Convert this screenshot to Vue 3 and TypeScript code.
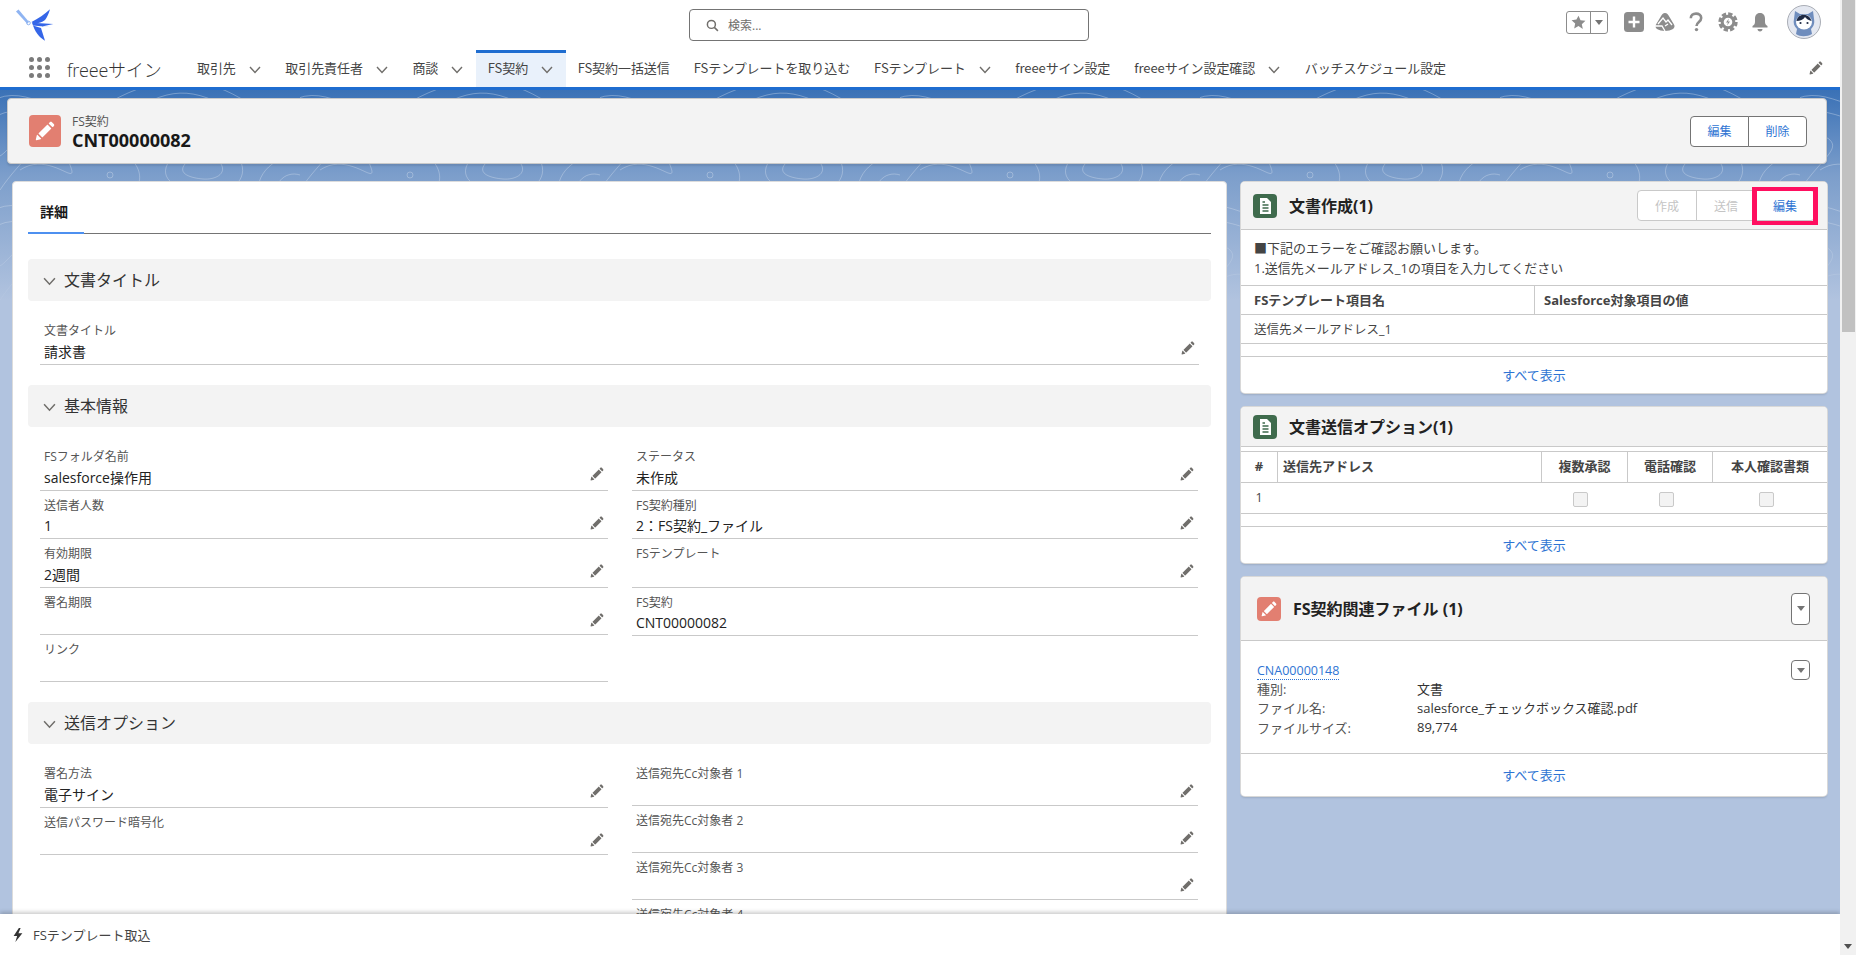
<template>
  <div class="app">
    <div class="page">
      <header class="global-header">
        <div class="top-row">
          <div class="logo-cell">
            <svg class="logo" viewBox="0 0 38 32">
              <path d="M0 2.500 2.500 .5 13 13l-1.800 1.800Z" fill="#8fb4f2" />
              <circle cx="12.500" cy="14" r="1.800" fill="none" stroke="#8fb4f2" />
              <path d="M34 .3C32.500 5 31 9 29 11 26 13.500 21 15 17.500 14.500L15.500 13C22 10 29 5 34 .3Z" fill="#3566e8" />
              <path d="M16 13.800 37.300 15 26 17.500 35.700 18.300 17 16.500Z" fill="#3566e8" />
              <path d="M17 16.500 25 19 29 31.700C25 29.500 20 25 17 16.500Z" fill="#3566e8" />
            </svg>
          </div>
          <div class="search">
            <svg class="search-icon" viewBox="0 0 14 14"><circle cx="5.8" cy="5.8" r="4.3" /><path d="M9 9l3.8 3.8" /></svg>
            <span>検索...</span>
          </div>
          <div class="actions">
            <div class="fav">
              <span class="fav-star">
                <svg viewBox="0 0 24 24"><path d="M12 2.500l2.900 6.400 6.900.8-5.100 4.700 1.400 6.900L12 17l-6.100 3.300 1.400-6.900-5.100-4.700 6.900-.8z" /></svg>
              </span>
              <span class="fav-arrow"><i class="tri"></i></span>
            </div>
            <svg class="act plus" viewBox="0 0 20 20">
              <rect width="20" height="20" rx="3.500" fill="#8c8c8c" />
              <path d="M10 4.500v11M4.500 10h11" stroke="#fff" stroke-width="2.400" />
            </svg>
            <svg class="act trail" viewBox="0 0 20 20">
              <path d="M10 1C12 1 13 2.500 14.500 5L19 12.500C20 14 19.500 16 18 17 14 19.500 6 19.500 2 17 .5 16 0 14 1 12.500L5.500 5C7 2.500 8 1 10 1Z" fill="#8c8c8c" />
              <path d="M3 12 8 6l3 4 2-2 4 5M0 14h7l3 5M10 14l3-2" fill="none" stroke="#fff" stroke-width="1.300" />
            </svg>
            <svg class="act help" viewBox="0 0 14 20">
              <path d="M1.800 6.200C1.800 3.400 4 1.600 7 1.600s5.200 1.700 5.200 4.300c0 4-4.700 4-4.700 8.100" fill="none" stroke="#8c8c8c" stroke-width="2.600" />
              <circle cx="7.500" cy="17.600" r="1.700" fill="#8c8c8c" />
            </svg>
            <svg class="act gear" viewBox="0 0 20 20">
              <circle cx="10" cy="10" r="8.200" fill="none" stroke="#8c8c8c" stroke-width="3" stroke-dasharray="4.300 2.130" />
              <circle cx="10" cy="10" r="5.800" fill="none" stroke="#8c8c8c" stroke-width="3" />
              <path d="M11 6.500 8 10.500h2l-1 3 3-4h-2z" fill="#8c8c8c" />
            </svg>
            <svg class="act bell" viewBox="0 0 20 20">
              <path d="M10 1C6.500 1 5 3.500 5 6.500V10c0 2-1 3-2.500 4v1.500h15V14C16 13 15 12 15 10V6.500C15 3.500 13.500 1 10 1Z" fill="#8c8c8c" />
              <path d="M7.500 17h5c0 1.500-1 2.500-2.500 2.500S7.500 18.500 7.500 17Z" fill="#8c8c8c" />
            </svg>
            <svg class="avatar" viewBox="0 0 34 34">
              <circle cx="17" cy="17" r="16.500" fill="#e4e8f1" stroke="#a9adb5" />
              <path d="M8 6l5 3h8l5-3 1 8c1 5-1 8-3 10l1 5c-5 3-12 3-16 0l1-5c-3-3-4-6-3-10Z" fill="#6f8dbd" />
              <ellipse cx="17" cy="17" rx="8" ry="7.500" fill="#fff" />
              <path d="M9.500 16c1-5 5-7 9-6 3 .5 5 3 6 6-3-1-5-2-6.500-4-1.500 2.500-5 4-8.500 4Z" fill="#1f2a44" />
              <circle cx="13.500" cy="18" r="1.100" fill="#1f2a44" />
              <circle cx="20.500" cy="18" r="1.100" fill="#1f2a44" />
            </svg>
          </div>
        </div>
        <nav class="nav-row">
          <div class="waffle">
            <i v-for="n in 9" :key="n"></i>
          </div>
          <span class="app-name">freeeサイン</span>
          <div
            v-for="tab in tabs"
            :key="tab.label"
            class="tab"
            :class="{ active: tab.active }"
          >
            {{ tab.label }}
            <svg v-if="tab.menu" class="chev" viewBox="0 0 12 8"><path d="M1 1l5 5.500L11 1" /></svg>
          </div>
          <svg class="pencil nav-pencil" viewBox="0 0 52 52"><path :d="editPath" /></svg>
        </nav>
      </header>

      <main class="content">
        <svg class="texture" width="1840" height="230">
          <defs>
            <pattern id="topo" width="300" height="110" patternUnits="userSpaceOnUse">
              <path d="M-10 30C30 0 70 60 120 28S190 -5 240 24 290 50 310 30" />
              <path d="M-10 12C30 -12 60 40 110 12S200 -15 240 8 290 28 310 12" />
              <path d="M20 80C50 60 80 100 70 75S40 40 90 50 150 90 130 105" />
              <path d="M0 100C20 70 40 60 30 50S10 60 0 66" />
              <path d="M170 70c20-25 60-20 70 0s-10 35-35 33-50-13-35-33Z" />
              <path d="M185 74c10-12 30-10 36 0s-6 16-18 15-26-5-18-15Z" />
              <circle cx="150" cy="50" r="4" />
              <circle cx="110" cy="85" r="3" />
              <path d="M260 110C250 85 280 60 300 70" />
              <path d="M280 110C270 95 285 80 300 85" />
            </pattern>
            <linearGradient id="fade" x1="0" y1="0" x2="0" y2="1">
              <stop offset="0" stop-color="#fff" stop-opacity="1" />
              <stop offset=".55" stop-color="#fff" stop-opacity=".8" />
              <stop offset="1" stop-color="#fff" stop-opacity="0" />
            </linearGradient>
            <mask id="fadeMask"><rect width="1840" height="230" fill="url(#fade)" /></mask>
          </defs>
          <rect width="1840" height="230" fill="url(#topo)" mask="url(#fadeMask)" />
        </svg>

        <div class="record-head">
          <span class="tile orange big">
            <svg viewBox="0 0 52 52"><path :d="editPath" /></svg>
          </span>
          <div class="record-title">
            <div class="record-type">FS契約</div>
            <div class="record-name">CNT00000082</div>
          </div>
          <div class="btn-group head-btns">
            <button type="button">編集</button>
            <button type="button">削除</button>
          </div>
        </div>

        <div class="columns">
          <section class="detail-card">
            <div class="tabbar"><span class="tab-detail">詳細</span></div>

            <template v-for="sec in sections" :key="sec.title">
              <div class="sec-head">
                <svg class="chev" viewBox="0 0 12 8"><path d="M1 1l5 5.500L11 1" /></svg>
                {{ sec.title }}
              </div>
              <div class="fields" :class="{ single: !sec.right }">
                <div class="field-col">
                  <div
                    v-for="f in sec.left"
                    :key="f.label"
                    class="field"
                    :class="{ empty: !f.value }"
                  >
                    <div class="f-label">{{ f.label }}</div>
                    <div class="f-value">{{ f.value }}</div>
                    <svg v-if="!f.readonly" class="pencil" viewBox="0 0 52 52"><path :d="editPath" /></svg>
                  </div>
                </div>
                <div v-if="sec.right" class="field-col">
                  <div
                    v-for="f in sec.right"
                    :key="f.label"
                    class="field"
                    :class="{ empty: !f.value }"
                  >
                    <div class="f-label">{{ f.label }}</div>
                    <div class="f-value">{{ f.value }}</div>
                    <svg v-if="!f.readonly" class="pencil" viewBox="0 0 52 52"><path :d="editPath" /></svg>
                  </div>
                </div>
              </div>
            </template>
          </section>

          <aside class="side">
            <section class="card">
              <div class="card-head h48">
                <span class="tile green">
                  <svg viewBox="0 0 24 24"><path d="M7 4h7l4 4v12H7Z" /><path d="M9.500 11h6M9.500 14h6M9.500 17h6M9.500 8h2.500" stroke="#3f6b4d" stroke-width="1.500" /></svg>
                </span>
                <h2>文書作成(1)</h2>
                <div class="btn-group muted">
                  <button type="button" disabled>作成</button>
                  <button type="button" disabled>送信</button>
                  <button type="button" class="on">編集</button>
                  <span class="mark"></span>
                </div>
              </div>
              <div class="notice">
                <p>■下記のエラーをご確認お願いします。</p>
                <p>1.送信先メールアドレス_1の項目を入力してください</p>
              </div>
              <div class="grid-row th two">
                <div>FSテンプレート項目名</div>
                <div class="narrow">Salesforce対象項目の値</div>
              </div>
              <div class="grid-row two td">
                <div class="plain">送信先メールアドレス_1</div>
              </div>
              <div class="spacer"></div>
              <a class="view-all">すべて表示</a>
            </section>

            <section class="card">
              <div class="card-head h40">
                <span class="tile green">
                  <svg viewBox="0 0 24 24"><path d="M7 4h7l4 4v12H7Z" /><path d="M9.500 11h6M9.500 14h6M9.500 17h6M9.500 8h2.500" stroke="#3f6b4d" stroke-width="1.500" /></svg>
                </span>
                <h2>文書送信オプション(1)</h2>
              </div>
              <div class="grid-row th five">
                <div class="c">#</div>
                <div>送信先アドレス</div>
                <div class="c">複数承認</div>
                <div class="c">電話確認</div>
                <div class="c">本人確認書類</div>
              </div>
              <div class="grid-row five">
                <div class="c plain">1</div>
                <div></div>
                <div class="c box"><i class="check"></i></div>
                <div class="c box"><i class="check"></i></div>
                <div class="c box"><i class="check"></i></div>
              </div>
              <div class="spacer"></div>
              <a class="view-all">すべて表示</a>
            </section>

            <section class="card">
              <div class="card-head h64">
                <span class="tile orange">
                  <svg viewBox="0 0 52 52"><path :d="editPath" /></svg>
                </span>
                <h2>FS契約関連ファイル (1)</h2>
                <span class="menu-btn tall"><i class="tri"></i></span>
              </div>
              <div class="file">
                <span class="menu-btn"><i class="tri"></i></span>
                <a class="file-link">CNA00000148</a>
                <dl>
                  <template v-for="row in fileRows" :key="row[0]">
                    <dt>{{ row[0] }}</dt>
                    <dd>{{ row[1] }}</dd>
                  </template>
                </dl>
              </div>
              <a class="view-all file-all">すべて表示</a>
            </section>
          </aside>
        </div>
      </main>

      <footer class="utility">
        <svg viewBox="0 0 12 16"><path d="M7 0 1 9h4l-2 7 8-10H6.500L9 0Z" /></svg>
        FSテンプレート取込
      </footer>
    </div>

    <div class="scrollbar">
      <div class="thumb"></div>
      <i class="sb-arrow"></i>
    </div>
  </div>
</template>

<script setup lang="ts">
interface Field {
  label: string
  value?: string
  readonly?: boolean
}

interface Section {
  title: string
  left: Field[]
  right?: Field[]
}

const editPath =
  'M9.5 33.4l8.9 8.9c.4.4 1 .4 1.4 0L42 20c.4-.4.4-1 0-1.4l-8.8-8.8c-.4-.4-1-.4-1.4 0L9.5 32.1c-.4.4-.4 1 0 1.3zM36.1 5.7c-.4.4-.4 1 0 1.4l8.8 8.8c.4.4 1 .4 1.4 0l2.5-2.5c1.6-1.5 1.6-3.9 0-5.5l-4.7-4.7c-1.6-1.6-4.1-1.6-5.7 0l-2.3 2.5zM2.1 48.2c-.2 1 .7 1.9 1.7 1.7l10.9-2.6c.4-.1.7-.3.9-.5l.2-.2c.2-.2.3-.9-.1-1.3l-9-9c-.4-.4-1.1-.3-1.3-.1l-.2.2c-.3.3-.4.6-.5.9L2.1 48.2z'

const tabs = [
  { label: '取引先', menu: true },
  { label: '取引先責任者', menu: true },
  { label: '商談', menu: true },
  { label: 'FS契約', menu: true, active: true },
  { label: 'FS契約一括送信' },
  { label: 'FSテンプレートを取り込む' },
  { label: 'FSテンプレート', menu: true },
  { label: 'freeeサイン設定' },
  { label: 'freeeサイン設定確認', menu: true },
  { label: 'バッチスケジュール設定' },
]

const sections: Section[] = [
  {
    title: '文書タイトル',
    left: [{ label: '文書タイトル', value: '請求書' }],
  },
  {
    title: '基本情報',
    left: [
      { label: 'FSフォルダ名前', value: 'salesforce操作用' },
      { label: '送信者人数', value: '1' },
      { label: '有効期限', value: '2週間' },
      { label: '署名期限' },
      { label: 'リンク', readonly: true },
    ],
    right: [
      { label: 'ステータス', value: '未作成' },
      { label: 'FS契約種別', value: '2：FS契約_ファイル' },
      { label: 'FSテンプレート', value: ' ' },
      { label: 'FS契約', value: 'CNT00000082', readonly: true },
    ],
  },
  {
    title: '送信オプション',
    left: [
      { label: '署名方法', value: '電子サイン' },
      { label: '送信パスワード暗号化' },
    ],
    right: [
      { label: '送信宛先Cc対象者 1' },
      { label: '送信宛先Cc対象者 2' },
      { label: '送信宛先Cc対象者 3' },
      { label: '送信宛先Cc対象者 4' },
    ],
  },
]

const fileRows = [
  ['種別:', '文書'],
  ['ファイル名:', 'salesforce_チェックボックス確認.pdf'],
  ['ファイルサイズ:', '89,774'],
]
</script>

<style scoped>
.app {
  display: flex;
  width: 1856px;
  height: 955px;
  overflow: hidden;
  font-family: "Open Sans", "Noto Sans CJK JP", sans-serif;
  font-size: 13px;
  color: #444;
}
.page {
  position: relative;
  width: 1840px;
  display: flex;
  flex-direction: column;
}

/* header */
.global-header {
  background: #fff;
  border-bottom: 3px solid #1f6dd0;
}
.top-row {
  display: grid;
  grid-template-columns: 689px 400px 1fr;
  height: 50px;
}
.logo-cell {
  padding: 9px 0 0 16px;
}
.logo {
  display: block;
  width: 38px;
  height: 32px;
}
.search {
  display: flex;
  align-items: center;
  gap: 9px;
  height: 32px;
  margin-top: 9px;
  padding-left: 16px;
  border: 1px solid #747474;
  border-radius: 4px;
  box-sizing: border-box;
  color: #706e6b;
  font-size: 12px;
}
.search-icon {
  width: 13px;
  height: 13px;
  fill: none;
  stroke: #706e6b;
  stroke-width: 1.6;
}
.actions {
  display: flex;
  align-items: center;
  justify-content: flex-end;
  padding-right: 19px;
  height: 44px;
}
.fav {
  display: flex;
  width: 42px;
  height: 23px;
  border: 1px solid #8c8c8c;
  border-radius: 3px;
  box-sizing: border-box;
  margin-right: 16px;
}
.fav-star {
  width: 23px;
  border-right: 1px solid #8c8c8c;
  display: flex;
  align-items: center;
  justify-content: center;
}
.fav-star svg {
  width: 17px;
  height: 17px;
  fill: #8c8c8c;
}
.fav-arrow {
  flex: 1;
  display: flex;
  align-items: center;
  justify-content: center;
}
.tri {
  display: block;
  width: 0;
  height: 0;
  border-left: 4px solid transparent;
  border-right: 4px solid transparent;
  border-top: 5px solid #747474;
}
.act {
  display: block;
  width: 20px;
  height: 20px;
}
.act.plus { margin-right: 11px; }
.act.trail { margin-right: 14px; }
.act.help { width: 14px; margin-right: 15px; }
.act.gear { margin-right: 12px; }
.act.bell { margin-right: 17px; }
.avatar {
  width: 34px;
  height: 34px;
}
.nav-row {
  display: flex;
  align-items: center;
  height: 37px;
  padding-left: 29px;
}
.waffle {
  display: grid;
  grid-template-columns: repeat(3, 5px);
  gap: 3px;
  margin-top: -2px;
}
.waffle i {
  width: 5px;
  height: 5px;
  border-radius: 50%;
  background: #7b7b7b;
}
.app-name {
  width: 118px;
  margin-left: 17px;
  font-size: 18px;
  color: #333;
  font-weight: 300;
  letter-spacing: -0.2px;
}
.tab {
  display: flex;
  align-items: center;
  height: 37px;
  padding: 0 12px 6px;
  box-sizing: border-box;
  white-space: nowrap;
  font-family: "Noto Sans CJK JP", sans-serif;
  font-size: 13px;
  letter-spacing: -0.07px;
  border-top: 3px solid transparent;
}
.tab .chev {
  margin: 6px 0.5px 0 13px;
}
.tab.active {
  background: #e9f1fb;
  border-top-color: #1f6dd0;
}
.chev {
  width: 12px;
  height: 8px;
  flex: none;
  fill: none;
  stroke: #706e6b;
  stroke-width: 1.4;
}
.pencil {
  position: absolute;
  right: 3px;
  top: 50%;
  width: 14px;
  height: 14px;
  fill: #706e6b;
}
.nav-row .nav-pencil {
  position: static;
  margin-left: auto;
  margin-right: 17px;
  margin-top: -2px;
}

/* page background */
.content {
  position: relative;
  flex: 1;
  overflow: hidden;
  padding-top: 8px;
  background: linear-gradient(#3a71b6 0, #7c9ecb 85px, #b1c3df 210px);
}
.texture {
  position: absolute;
  left: 0;
  top: 0;
}
.texture path,
.texture circle {
  fill: none;
  stroke: #fff;
  stroke-opacity: 0.3;
  stroke-width: 1;
}
.record-head {
  position: relative;
  display: flex;
  align-items: center;
  height: 66px;
  margin: 0 13px 17px 7px;
  padding: 0 19px 0 21px;
  box-sizing: border-box;
  background: #f3f3f3;
  border: 1px solid #c9c9c9;
  border-radius: 4px;
  box-shadow: 0 2px 2px rgba(0, 0, 0, 0.1);
}
.record-title {
  margin: 2px 0 0 11px;
}
.record-type {
  font-size: 12px;
  line-height: 16px;
  color: #555;
}
.record-name {
  font-size: 18px;
  font-weight: 700;
  line-height: 20px;
  color: #181818;
}
.tile {
  flex: none;
  display: flex;
  align-items: center;
  justify-content: center;
  width: 24px;
  height: 24px;
  border-radius: 4px;
}
.tile svg {
  width: 100%;
  height: 100%;
  fill: #fff;
}
.tile.orange {
  background: #e27f71;
}
.tile.orange svg {
  width: 16px;
  height: 16px;
}
.tile.big {
  width: 32px;
  height: 32px;
}
.tile.big svg {
  width: 20px;
  height: 20px;
}
.tile.green {
  background: #3f6b4d;
  border-radius: 4px;
}
.btn-group {
  position: relative;
  display: flex;
  margin-left: auto;
}
.btn-group button {
  width: 60px;
  height: 31px;
  padding: 0;
  margin-left: -1px;
  background: #fff;
  border: 1px solid #747474;
  color: #2e74d3;
  font: inherit;
  font-size: 12px;
}
.head-btns button {
  width: 59px;
}
.btn-group button:first-of-type {
  border-radius: 4px 0 0 4px;
}
.btn-group button:last-of-type {
  border-radius: 0 4px 4px 0;
}
.btn-group.muted button {
  border-color: #c9c9c9;
}
.btn-group.muted button:disabled {
  color: #c4c4c4;
}
.mark {
  position: absolute;
  right: -3px;
  top: -3px;
  width: 66px;
  height: 38px;
  box-sizing: border-box;
  border: solid #ff0f60;
  border-width: 4px 5px;
}

/* columns */
.columns {
  position: relative;
  display: grid;
  grid-template-columns: 1215px 586px;
  gap: 14px;
  margin-left: 12px;
  align-items: start;
}
.detail-card {
  padding: 0 15px 30px;
  background: #fff;
  border: 1px solid #dcdcdc;
  border-radius: 4px;
  box-sizing: border-box;
}
.tabbar {
  height: 51px;
  margin-bottom: 25px;
  display: flex;
  align-items: flex-end;
  border-bottom: 1px solid #747474;
}
.tab-detail {
  width: 56px;
  box-sizing: border-box;
  height: 33px;
  margin-bottom: -1px;
  padding-left: 12px;
  font-size: 14px;
  font-weight: 700;
  color: #181818;
  border-bottom: 2px solid #4d90f0;
}
.sec-head {
  display: flex;
  align-items: center;
  gap: 8px;
  height: 42px;
  padding: 0 0 2px 15px;
  box-sizing: border-box;
  background: #f3f3f3;
  border-radius: 4px;
  font-size: 16px;
  color: #333;
}
.sec-head .chev {
  width: 13px;
  height: 9px;
  margin-top: 5px;
}
.fields {
  display: grid;
  grid-template-columns: 568px 566px;
  column-gap: 24px;
  margin: 15px 12px 20.5px;
}
.fields.single {
  grid-template-columns: 1fr;
}
.field {
  position: relative;
  height: 48.5px;
  box-sizing: border-box;
  padding: 7px 0 0 4px;
  border-bottom: 1px solid #c9c9c9;
}
.field.empty {
  height: 47px;
}
.f-label {
  font-size: 12px;
  line-height: 16px;
  color: #555;
}
.f-value {
  margin-top: 2.5px;
  font-size: 14px;
  line-height: 20px;
  color: #222;
}
.field .pencil {
  right: 4px;
  top: 25px;
}

/* side cards */
.side {
  display: flex;
  flex-direction: column;
  gap: 14px;
  margin-top: 1px;
}
.card {
  background: #fff;
  border-radius: 4px;
  box-shadow: 0 0 0 1px #d8d8d8, 0 2px 2px rgba(0, 0, 0, 0.12);
  overflow: hidden;
}
.card-head {
  display: flex;
  align-items: center;
  gap: 12px;
  padding: 0 12px;
  background: #f3f3f3;
  box-sizing: border-box;
  border-bottom: 1px solid #c9c9c9;
}
.card-head h2 {
  margin: 0;
  padding-bottom: 1px;
  font-size: 16px;
  font-weight: 700;
  color: #222;
}
.h48 { height: 48px; }
.h40 { height: 40px; }
.h64 { height: 64px; padding: 0 17px 0 16px; }
.notice {
  height: 55px;
  padding: 8px 13px 0;
  box-sizing: border-box;
  font-size: 13px;
  line-height: 20px;
}
.notice p { margin: 0; }
.grid-row {
  display: grid;
  font-size: 13px;
  border-top: 1px solid #c9c9c9;
  box-sizing: border-box;
}
.grid-row > div {
  display: flex;
  align-items: center;
  padding: 0 0 1px 13px;
}
.grid-row > div.narrow {
  padding-left: 9px;
}
.grid-row.th > div {
  font-weight: 700;
  color: #444;
}
.grid-row.th.five > div {
  padding-bottom: 3px;
}
.grid-row.th > div + div {
  border-left: 1px solid #c9c9c9;
}
.grid-row > div.c {
  justify-content: center;
  padding-left: 0;
}
.grid-row > div.box {
  padding: 2px 7px 0 0;
}
.grid-row > div.plain {
  font-weight: 400;
  font-size: 12.5px;
}
.two {
  grid-template-columns: 293px 293px;
  height: 29px;
}
.five {
  grid-template-columns: 36px 264px 86px 85px 115px;
  height: 31px;
}
.th.five {
  margin-top: 4px;
}
.grid-row.five > div:nth-child(2) {
  padding-left: 5px;
}
.check {
  display: block;
  width: 15px;
  height: 15px;
  border: 1px solid #c9c9c9;
  border-radius: 2px;
  background: #f3f3f3;
  box-sizing: border-box;
}
.spacer {
  height: 13px;
  border-top: 1px solid #c9c9c9;
  box-sizing: border-box;
}
.view-all {
  display: block;
  height: 37px;
  line-height: 37px;
  border-top: 1px solid #c9c9c9;
  box-sizing: border-box;
  text-align: center;
  font-size: 13px;
  color: #2e74d3;
}
.file-all {
  height: 43px;
  line-height: 43px;
}
.menu-btn {
  display: flex;
  align-items: center;
  justify-content: center;
  width: 19px;
  height: 20px;
  box-sizing: border-box;
  border: 1px solid #747474;
  border-radius: 4px;
  background: #fff;
}
.menu-btn.tall {
  height: 32px;
  margin-left: auto;
}
.file {
  position: relative;
  height: 112px;
  padding: 20px 16px 0;
  box-sizing: border-box;
  font-size: 13px;
}
.file .menu-btn {
  position: absolute;
  right: 17px;
  top: 19px;
}
.file-link {
  color: #2e74d3;
  font-size: 12.5px;
  line-height: 17px;
  border-bottom: 1px dotted #2e74d3;
}
.file dl {
  display: grid;
  grid-template-columns: 160px 1fr;
  grid-auto-rows: 19.5px;
  align-items: center;
  margin: -0.5px 0 0;
}
.file dt { color: #555; }
.file dd { margin: 0; color: #333; }

/* bottom bar and scrollbar */
.utility {
  position: absolute;
  left: 0;
  right: 0;
  bottom: 0;
  height: 41px;
  display: flex;
  align-items: center;
  gap: 9px;
  padding-left: 12px;
  background: #fff;
  box-shadow: 0 -2px 4px rgba(0, 0, 0, 0.2);
  font-size: 13px;
}
.utility svg {
  width: 12px;
  height: 14px;
  fill: #333;
}
.scrollbar {
  position: relative;
  flex: none;
  width: 16px;
  background: #f1f1f1;
}
.thumb {
  width: 13px;
  height: 332px;
  margin-left: 2px;
  background: #c1c1c1;
}
.sb-arrow {
  position: absolute;
  left: 4px;
  bottom: 6px;
  border-left: 4px solid transparent;
  border-right: 4px solid transparent;
  border-top: 5px solid #505050;
}
</style>

<style>
html,
body {
  margin: 0;
  overflow: hidden;
}
</style>
